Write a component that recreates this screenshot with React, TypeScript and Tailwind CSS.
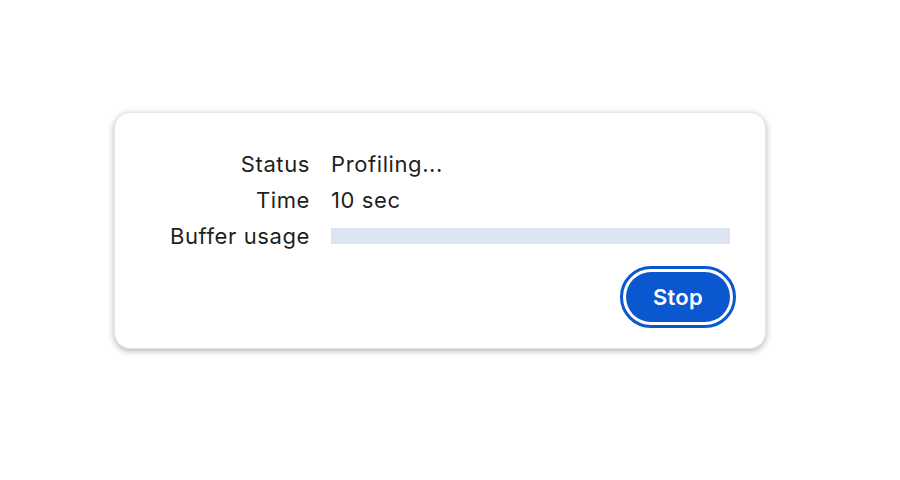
import React from 'react';

const rows = [
  { label: 'Status', value: 'Profiling...' },
  { label: 'Time', value: '10 sec' },
];

export default function App() {
  return (
    <div className="min-h-[480px] w-[900px] bg-white pt-[112px] pl-[114px] font-['Inter',sans-serif] text-[#1f1f1f]">
      <div className="w-[652px] h-[237px] rounded-[16px] border border-[#e6e6e6] bg-white shadow-[0_2px_6px_rgba(0,0,0,0.3)] pt-[33px] pr-[35px] flex flex-col">
        <div className="grid grid-cols-[195px_1fr] gap-x-[21px] text-[22px] tracking-[0.6px] leading-[36px]">
          {rows.map((r) => (
            <React.Fragment key={r.label}>
              <div className="text-right">{r.label}</div>
              <div>{r.value}</div>
            </React.Fragment>
          ))}
          <div className="text-right">Buffer usage</div>
          <div className="flex items-center">
            <div className="h-[16px] w-full bg-[#dce4f3]" />
          </div>
        </div>
        <div className="flex justify-end mt-[18px]">
          <button className="w-[104px] h-[50px] rounded-full bg-[#0b57d0] text-white text-[22px] font-semibold tracking-[0.3px] outline-3 outline-solid outline-[#0b57d0] outline-offset-3">
            Stop
          </button>
        </div>
      </div>
    </div>
  );
}
